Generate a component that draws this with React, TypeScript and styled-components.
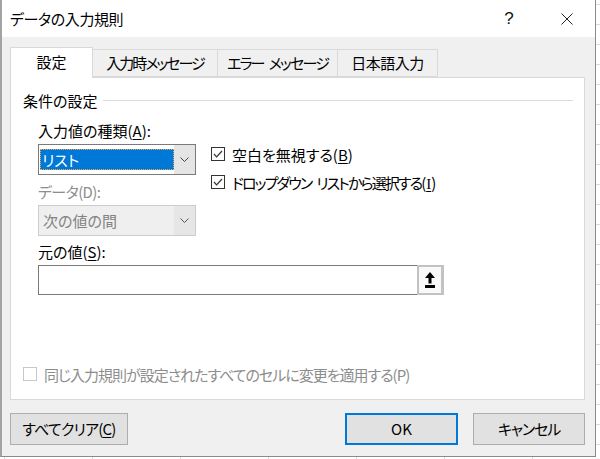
import React from "react";
import styled, { createGlobalStyle } from "styled-components";

const Global = createGlobalStyle`
  html, body { margin: 0; padding: 0; background: #fff; }
  #root { width: 600px; height: 459px; }
`;

const Screen = styled.div`
  width: 600px;
  height: 459px;
  overflow: hidden;
  background-color: #fff;
  background-image: linear-gradient(#dadada 1px, transparent 1px),
    linear-gradient(90deg, #dadada 1px, transparent 1px);
  background-size: 88px 20px;
  background-position: 4px 4px;
`;

const Dialog = styled.div`
  width: 596px;
  height: 457px;
  box-sizing: border-box;
  border-left: 2px solid #a3a3a3;
  border-right: 1px solid #8a8a8a;
  border-bottom: 1px solid #8a8a8a;
  background: #f0f0f0;
  display: flex;
  flex-direction: column;
  font-family: "Noto Sans CJK JP", "Noto Sans", sans-serif;
  font-size: 15px;
  font-feature-settings: "palt";
  color: #000;
`;

const TitleBar = styled.div`
  height: 37px;
  flex: none;
  background: #fff;
  display: flex;
  align-items: center;
  padding-left: 8px;
  padding-right: 5px;
`;

const Title = styled.div`
  flex: 1;
  line-height: 20px;
  letter-spacing: -0.4px;
`;

const CaptionButton = styled.div<{ $gap?: number }>`
  width: 46px;
  height: 37px;
  margin-left: ${(p) => p.$gap ?? 0}px;
  display: flex;
  align-items: center;
  justify-content: center;
  font-family: "Liberation Sans", sans-serif;
  font-size: 17px;
  color: #111;
`;

const Body = styled.div`
  flex: 1;
  display: flex;
  flex-direction: column;
  padding: 10px 10px 0 8px;
`;

const TabRow = styled.div`
  display: flex;
  align-items: flex-end;
  height: 30px;
  position: relative;
  z-index: 1;
`;

const Tab = styled.div<{ $w: number; $active?: boolean; $ls?: number }>`
  width: ${(p) => p.$w}px;
  height: ${(p) => (p.$active ? 31 : 28)}px;
  margin-bottom: ${(p) => (p.$active ? -1 : 0)}px;
  margin-left: -1px;
  &:first-child { margin-left: 0; }
  box-sizing: border-box;
  border: 1px solid #d9d9d9;
  border-bottom: ${(p) => (p.$active ? "none" : "1px solid #d9d9d9")};
  background: ${(p) => (p.$active ? "#fff" : "#f0f0f0")};
  display: flex;
  align-items: center;
  justify-content: center;
  padding-bottom: ${(p) => (p.$active ? 2 : 0)}px;
  white-space: pre;
  line-height: 18px;
  letter-spacing: ${(p) => p.$ls ?? 0}px;
`;

const Space = styled.span<{ $w: number }>`
  display: inline-block;
  width: ${(p) => p.$w}px;
`;

const Tight = styled.span<{ $ls: number }>`
  letter-spacing: ${(p) => p.$ls}px;
`;

const Panel = styled.div`
  height: 323px;
  box-sizing: border-box;
  background: #fff;
  border: 1px solid #d9d9d9;
  display: flex;
  flex-direction: column;
  padding: 14px 11px 0 12px;
`;

const GroupHead = styled.div`
  display: flex;
  align-items: center;
  height: 18px;
  line-height: 18px;
`;

const GroupLine = styled.div`
  flex: 1;
  height: 1px;
  background: #dcdcdc;
  margin-left: 6px;
  margin-top: -2px;
`;

const Form = styled.div`
  margin-left: 15px;
  display: flex;
  flex-direction: column;
`;

const TopRow = styled.div`
  display: flex;
  margin-top: 12px;
  gap: 15px;
`;

const LeftCol = styled.div`
  width: 158px;
  display: flex;
  flex-direction: column;
`;

const RightCol = styled.div`
  display: flex;
  flex-direction: column;
  padding-top: 23px;
  gap: 10px;
`;

const Label = styled.div<{ $disabled?: boolean; $mt?: number; $ls?: number }>`
  height: 18px;
  line-height: 18px;
  margin-top: ${(p) => p.$mt ?? 0}px;
  color: ${(p) => (p.$disabled ? "#8d8d8d" : "#000")};
  white-space: pre;
  letter-spacing: ${(p) => p.$ls ?? 0}px;
`;

const U = styled.span`
  text-decoration: underline;
  text-underline-offset: 2px;
`;

const SerifI = styled.span`
  font-family: "Liberation Serif", serif;
  text-decoration: underline;
  text-underline-offset: 2px;
`;

const Combo = styled.div<{ $disabled?: boolean }>`
  margin-top: 4px;
  height: 31px;
  box-sizing: border-box;
  display: flex;
  border: 1px solid ${(p) => (p.$disabled ? "#cccccc" : "#7a7a7a")};
  background: ${(p) => (p.$disabled ? "#efefef" : "#fff")};
  color: ${(p) => (p.$disabled ? "#838383" : "#000")};
`;

const ComboValue = styled.div`
  flex: 1;
  display: flex;
  align-items: center;
  padding: 0 0 0 1px;
`;

const Selection = styled.div`
  flex: 1;
  height: 21px;
  box-sizing: border-box;
  background: #0078d7;
  color: #fff;
  border: 1px dotted #f0a848;
  line-height: 19px;
  padding-left: 1px;
`;

const PlainValue = styled.div`
  padding-left: 3px;
  line-height: 20px;
`;

const DropButton = styled.div<{ $disabled?: boolean }>`
  width: 21px;
  background: ${(p) => (p.$disabled ? "#e6e6e6" : "#e5e5e5")};
  display: flex;
  align-items: center;
  justify-content: center;
`;

const CheckRow = styled.div<{ $disabled?: boolean; $ls?: number }>`
  display: flex;
  align-items: center;
  height: 18px;
  gap: 7px;
  white-space: pre;
  color: ${(p) => (p.$disabled ? "#8d8d8d" : "#000")};
  letter-spacing: ${(p) => p.$ls ?? 0}px;
`;

const Box = styled.span<{ $disabled?: boolean }>`
  width: 14px;
  height: 14px;
  box-sizing: border-box;
  border: 1px solid ${(p) => (p.$disabled ? "#c8c8c8" : "#333")};
  background: #fff;
  display: flex;
  align-items: center;
  justify-content: center;
  flex: none;
`;

const InputWrap = styled.div`
  margin-top: 4px;
  width: 406px;
  height: 30px;
  box-sizing: border-box;
  border: 1px solid #7a7a7a;
  display: flex;
  background: #fff;
`;

const Field = styled.div`
  flex: 1;
`;

const PickButton = styled.div`
  width: 27px;
  margin: -1px -1px -1px 0;
  box-sizing: border-box;
  border: 2px solid #c2c2c2;
  border-right-width: 3px;
  background: #f9f9f9;
  display: flex;
  align-items: center;
  justify-content: center;
`;

const BottomCheck = styled.div`
  margin-top: auto;
  margin-bottom: 16px;
`;

const Footer = styled.div`
  display: flex;
  padding-top: 13px;
  gap: 15px;
`;

const Button = styled.div<{ $w: number; $primary?: boolean; $push?: boolean; $ls?: number }>`
  width: ${(p) => p.$w}px;
  height: 32px;
  box-sizing: border-box;
  background: #e1e1e1;
  border: ${(p) => (p.$primary ? "2px solid #0078d7" : "1px solid #adadad")};
  margin-left: ${(p) => (p.$push ? "auto" : "0")};
  display: flex;
  align-items: center;
  justify-content: center;
  line-height: 18px;
  white-space: pre;
  letter-spacing: ${(p) => p.$ls ?? 0}px;
`;

const Chevron = ({ color = "#444" }: { color?: string }) => (
  <svg width="9" height="5" viewBox="0 0 9 5">
    <path d="M0.5 0.5 L4.5 4.5 L8.5 0.5" fill="none" stroke={color} strokeWidth="1" />
  </svg>
);

const Check = () => (
  <svg width="12" height="12" viewBox="0 0 12 12">
    <path d="M2 6 L4.6 8.8 L10 3" fill="none" stroke="#333" strokeWidth="1.2" />
  </svg>
);

const CheckBox = ({
  checked,
  disabled,
  ls,
  children,
}: {
  checked?: boolean;
  disabled?: boolean;
  ls?: number;
  children: React.ReactNode;
}) => (
  <CheckRow $disabled={disabled} $ls={ls}>
    <Box $disabled={disabled}>{checked && <Check />}</Box>
    <span>{children}</span>
  </CheckRow>
);

export default function App() {
  return (
    <>
      <Global />
      <Screen>
        <Dialog>
          <TitleBar>
            <Title>データの入力規則</Title>
            <CaptionButton>?</CaptionButton>
            <CaptionButton $gap={12}>
              <svg width="12" height="12" viewBox="0 0 12 12">
                <path d="M0.5 0.5 L11.5 11.5 M11.5 0.5 L0.5 11.5" stroke="#222" strokeWidth="1" />
              </svg>
            </CaptionButton>
          </TitleBar>
          <Body>
            <TabRow>
              <Tab $w={83} $active>
                設定
              </Tab>
              <Tab $w={126} $ls={-2}>
                入力時メッセージ
              </Tab>
              <Tab $w={121} $ls={-1.8}>
                エラー
                <Space $w={5} />
                メッセージ
              </Tab>
              <Tab $w={101} $ls={-0.5}>
                日本語入力
              </Tab>
            </TabRow>
            <Panel>
              <GroupHead>
                <span>条件の設定</span>
                <GroupLine />
              </GroupHead>
              <Form>
                <TopRow>
                  <LeftCol>
                    <Label>
                      入力値の種類(<U>A</U>):
                    </Label>
                    <Combo>
                      <ComboValue>
                        <Selection>リスト</Selection>
                      </ComboValue>
                      <DropButton>
                        <Chevron />
                      </DropButton>
                    </Combo>
                    <Label $disabled $mt={8} $ls={-0.6}>
                      データ(D):
                    </Label>
                    <Combo $disabled>
                      <ComboValue>
                        <PlainValue>次の値の間</PlainValue>
                      </ComboValue>
                      <DropButton $disabled>
                        <Chevron color="#555" />
                      </DropButton>
                    </Combo>
                  </LeftCol>
                  <RightCol>
                    <CheckBox checked>
                      空白を無視する(<U>B</U>)
                    </CheckBox>
                    <CheckBox checked>
                      <Tight $ls={-1.9}>
                        ドロップダウン
                        <Space $w={5} />
                        リストから選択する
                      </Tight>
                      (<SerifI>I</SerifI>)
                    </CheckBox>
                  </RightCol>
                </TopRow>
                <Label $mt={7}>
                  元の値(<U>S</U>):
                </Label>
                <InputWrap>
                  <Field />
                  <PickButton>
                    <svg width="12" height="18" viewBox="0 0 12 18">
                      <path d="M6 1 L11 7 L1 7 Z" fill="#000" />
                      <rect x="4.5" y="6.5" width="3" height="6" fill="#000" />
                      <rect x="1" y="14" width="10" height="3" fill="#000" />
                    </svg>
                  </PickButton>
                </InputWrap>
              </Form>
              <BottomCheck>
                <CheckBox disabled ls={-1}>
                  同じ入力規則が設定されたすべてのセルに変更を適用する(P)
                </CheckBox>
              </BottomCheck>
            </Panel>
            <Footer>
              <Button $w={118} $ls={-0.8}>
                すべてクリア(<U>C</U>)
              </Button>
              <Button $w={113} $primary $push>
                OK
              </Button>
              <Button $w={112} $ls={-1.2}>
                キャンセル
              </Button>
            </Footer>
          </Body>
        </Dialog>
      </Screen>
    </>
  );
}
